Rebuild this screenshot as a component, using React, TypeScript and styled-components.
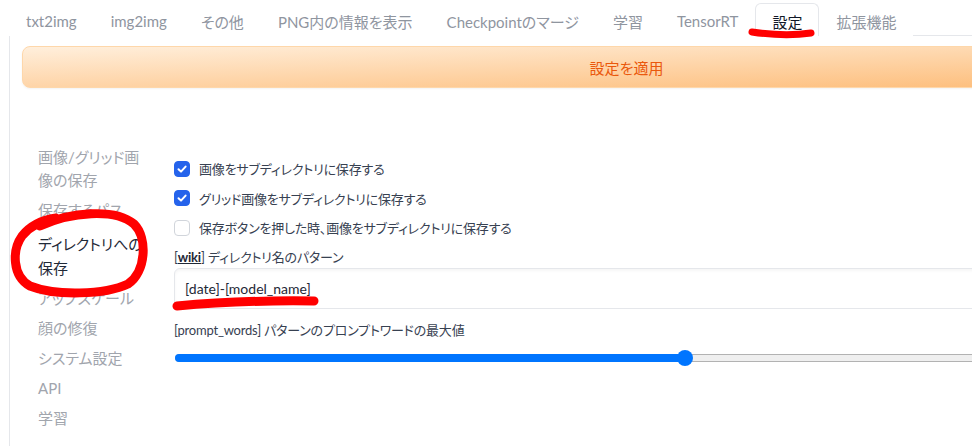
import styled, { createGlobalStyle } from 'styled-components';

const GlobalStyle = createGlobalStyle`
	html, body {
		margin: 0;
		padding: 0;
		overflow: hidden;
		background: #fff;
	}
	body {
		font-family: Lato, "Noto Sans CJK JP", sans-serif;
		font-feature-settings: "palt";
		color: #374151;
	}
`;

const Page = styled.div`
	position: relative;
	width: 1260px;
	padding: 3px 0 0 9px;
`;

const TabNav = styled.div`
	display: flex;
	border-bottom: 1px solid #e5e7eb;
`;

const Tab = styled.div<{ $active?: boolean }>`
	height: 33px;
	padding: 2px 16px 0;
	box-sizing: border-box;
	display: flex;
	align-items: center;
	font-size: 15px;
	color: ${({ $active }) => ($active ? '#111827' : '#8f959f')};
	background: #fff;
	border: 1px solid ${({ $active }) => ($active ? '#e5e7eb' : 'transparent')};
	border-bottom: none;
	border-radius: 6px 6px 0 0;
	margin-bottom: -1px;
	white-space: nowrap;
`;

const Panel = styled.div`
	width: 1234px;
	box-sizing: border-box;
	border-left: 1px solid #e5e7eb;
	padding: 10px 12px 40px;
`;

const ApplyButton = styled.div`
	height: 42px;
	box-sizing: border-box;
	display: flex;
	align-items: center;
	justify-content: center;
	font-size: 15px;
	color: #ea580c;
	background: linear-gradient(to bottom right, #ffefdc, #fdba74);
	border: 1px solid #fed7aa;
	border-radius: 8px;
	box-shadow: 0 1px 2px rgba(0, 0, 0, 0.05);
`;

const SettingsBody = styled.div`
	display: flex;
	margin-top: 54px;
`;

const Sidebar = styled.nav`
	width: 122px;
	box-sizing: border-box;
	padding-left: 16px;
	display: flex;
	flex-direction: column;
	flex-shrink: 0;
`;

const SideItem = styled.div<{ $active?: boolean }>`
	font-size: 15px;
	line-height: ${({ $active }) => ($active ? '24px' : '23px')};
	padding: 3.5px 0;
	margin-top: ${({ $active }) => ($active ? '3px' : '0')};
	color: ${({ $active }) => ($active ? '#1f2937' : '#a1a5ad')};
`;

const Content = styled.div`
	flex: 1;
	margin-left: 30px;
	padding-top: 12px;
	display: flex;
	flex-direction: column;
`;

const CheckRow = styled.label`
	display: flex;
	align-items: center;
	gap: 9px;
	height: 29.5px;
	font-size: 13px;
	letter-spacing: -0.2px;
	color: #374151;
`;

const Box = styled.span<{ $checked: boolean }>`
	width: 16px;
	height: 16px;
	box-sizing: border-box;
	border-radius: 4px;
	display: flex;
	align-items: center;
	justify-content: center;
	background: ${({ $checked }) => ($checked ? '#2563eb' : '#fff')};
	border: 1px solid ${({ $checked }) => ($checked ? '#2563eb' : '#d1d5db')};
`;

const FieldLabel = styled.div<{ $gap: number }>`
	font-size: 13px;
	letter-spacing: -0.2px;
	line-height: 20px;
	margin-top: ${({ $gap }) => $gap}px;
	color: #374151;

	a {
		color: #1f2937;
		font-weight: 700;
		text-decoration: underline;
	}
`;

const TextBox = styled.div`
	margin-top: 1px;
	height: 41px;
	box-sizing: border-box;
	display: flex;
	align-items: center;
	padding-left: 10px;
	font-size: 14px;
	color: #1f2937;
	border: 1px solid #e5e7eb;
	border-radius: 6px;
	box-shadow: inset 0 2px 3px rgba(0, 0, 0, 0.04);
`;

const SliderWrap = styled.div`
	margin-top: 10px;
	height: 16px;
	display: flex;
	align-items: center;
	padding-left: 1px;
`;

const Track = styled.div`
	position: relative;
	flex: 1;
	height: 8px;
	box-sizing: border-box;
	background: #efefef;
	border: 1px solid #b2b2b2;
	border-radius: 4px;
`;

const Fill = styled.div`
	position: absolute;
	left: -1px;
	top: -1px;
	bottom: -1px;
	background: #0075ff;
	border-radius: 4px;
`;

const Thumb = styled.div`
	position: absolute;
	top: 50%;
	width: 16px;
	height: 16px;
	border-radius: 50%;
	background: #0075ff;
	transform: translate(-50%, -50%);
`;

const Marks = styled.svg`
	position: absolute;
	left: 0;
	top: 0;
	pointer-events: none;
`;

const tabs = [
	'txt2img',
	'img2img',
	'その他',
	'PNG内の情報を表示',
	'Checkpointのマージ',
	'学習',
	'TensorRT',
	'設定',
	'拡張機能',
];

const sections = [
	'画像/グリッド画像の保存',
	'保存するパス',
	'ディレクトリへの保存',
	'アップスケール',
	'顔の修復',
	'システム設定',
	'API',
	'学習',
];

const checks = [
	{ label: '画像をサブディレクトリに保存する', checked: true },
	{ label: 'グリッド画像をサブディレクトリに保存する', checked: true },
	{ label: '保存ボタンを押した時、画像をサブディレクトリに保存する', checked: false },
];

function Check({ checked }: { checked: boolean }) {
	return (
		<Box $checked={checked}>
			{checked && (
				<svg width="12" height="12" viewBox="0 0 12 12">
					<path
						d="M2.5 6.2 L5 8.6 L9.6 3.6"
						fill="none"
						stroke="#fff"
						strokeWidth="2"
						strokeLinecap="round"
						strokeLinejoin="round"
					/>
				</svg>
			)}
		</Box>
	);
}

function Slider({ value, min, max }: { value: number; min: number; max: number }) {
	const pct = ((value - min) / (max - min)) * 100;
	return (
		<SliderWrap>
			<Track>
				<Fill style={{ width: `${pct}%` }} />
				<Thumb style={{ left: `${pct}%` }} />
			</Track>
		</SliderWrap>
	);
}

export default function App() {
	return (
		<>
			<GlobalStyle />
			<Page>
				<TabNav>
					{tabs.map((t) => (
						<Tab key={t} $active={t === '設定'}>
							{t}
						</Tab>
					))}
				</TabNav>
				<Panel>
					<ApplyButton>設定を適用</ApplyButton>
					<SettingsBody>
						<Sidebar>
							{sections.map((s, i) => (
								<SideItem key={i} $active={s === 'ディレクトリへの保存'}>
									{s}
								</SideItem>
							))}
						</Sidebar>
						<Content>
							{checks.map((c) => (
								<CheckRow key={c.label}>
									<Check checked={c.checked} />
									{c.label}
								</CheckRow>
							))}
							<FieldLabel $gap={4}>
								[<a>wiki</a>] ディレクトリ名のパターン
							</FieldLabel>
							<TextBox>[date]-[model_name]</TextBox>
							<FieldLabel $gap={11}>
								[prompt_words] パターンのプロンプトワードの最大値
							</FieldLabel>
							<Slider value={29} min={1} max={59} />
						</Content>
					</SettingsBody>
				</Panel>
				{/* hand-drawn red marks on top of the screenshot */}
				<Marks width="972" height="446" viewBox="0 0 972 446">
					<g fill="none" stroke="#f00" strokeLinecap="round" strokeLinejoin="round">
						<path d="M752 32 Q 785 37 811 33" strokeWidth="7" />
						<path
							d="M40 226 C 70 212, 115 208, 134 224 C 148 238, 146 272, 128 284 C 105 295, 55 296, 30 286 C 12 276, 12 250, 22 236 C 30 226, 42 220, 56 218"
							strokeWidth="9"
						/>
						<path d="M177 306 Q 240 300 314 301" strokeWidth="9" />
					</g>
				</Marks>
			</Page>
		</>
	);
}
